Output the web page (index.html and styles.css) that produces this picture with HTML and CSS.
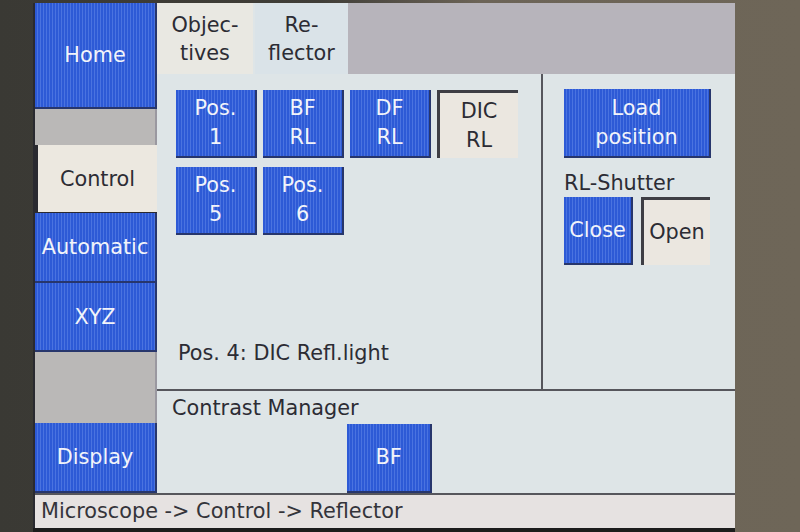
FILE: index.html
```html
<!DOCTYPE html>
<html lang="en">
<head>
  <meta charset="UTF-8" />
  <meta name="viewport" content="width=device-width, initial-scale=1.0" />
  <title>Microscope – Reflector</title>
  <link rel="stylesheet" href="styles.css">
</head>
<body>
  <div class="screen">
    <div class="top">
      <nav class="nav">
        <button class="nav-btn home">Home</button>
        <div class="nav-gap"></div>
        <button class="nav-btn active">Control</button>
        <button class="nav-btn auto">Automatic</button>
        <button class="nav-btn xyz">XYZ</button>
        <div class="nav-gap tall"></div>
        <button class="nav-btn display">Display</button>
      </nav>

      <main class="main">
        <div class="tabs">
          <div class="tab">Objec-<br>tives</div>
          <div class="tab current">Re-<br>flector</div>
          <div class="tab-fill"></div>
        </div>

        <div class="panel">
          <section class="positions">
            <div class="pos-grid">
              <button class="key">Pos.<br>1</button>
              <button class="key">BF<br>RL</button>
              <button class="key">DF<br>RL</button>
              <button class="key on">DIC<br>RL</button>
              <button class="key">Pos.<br>5</button>
              <button class="key">Pos.<br>6</button>
            </div>
            <p class="pos-info">Pos. 4: DIC Refl.light</p>
          </section>

          <section class="shutter">
            <button class="key load">Load<br>position</button>
            <div class="shutter-label">RL-Shutter</div>
            <div class="shutter-keys">
              <button class="key small">Close</button>
              <button class="key small on">Open</button>
            </div>
          </section>
        </div>

        <div class="contrast">
          <div class="contrast-label">Contrast Manager</div>
          <button class="key bf">BF</button>
        </div>
      </main>
    </div>

    <div class="status">Microscope -&gt; Control -&gt; Reflector</div>
  </div>
</body>
</html>
```

FILE: styles.css
```css
body {
  margin: 0;
  width: 800px;
  height: 532px;
  overflow: hidden;
  background: linear-gradient(90deg, #3a3934 0%, #403e38 40%, #6c6457 60%, #6e6658 100%);
  font-family: 'DejaVu Sans', sans-serif;
  font-size: 20.8px;
  color: #2c2c34;
}

.screen {
  margin: 3px 0 0 33px;
  width: 702px;
  height: 525px;
  display: flex;
  flex-direction: column;
  background: #dee5e7;
  border-left: 2px solid #2a2a30;
  box-sizing: border-box;
  box-shadow: 0 4px 0 #1c1c1c;
}

.top {
  display: flex;
  height: 490px;
}

/* left navigation column */
.nav {
  width: 122px;
  display: flex;
  flex-direction: column;
}

button {
  font: inherit;
  margin: 0;
  padding: 0;
  cursor: pointer;
}

.nav-btn {
  height: 70px;
  background: repeating-linear-gradient(90deg, #2d5ad6 0 2px, #4a73e0 2px 3px);
  color: #f2f4fa;
  border: none;
  border-right: 2px solid #27366c;
  border-bottom: 2px solid #27366c;
}

.nav-btn.home {
  height: 106px;
}

.nav-btn.active {
  height: 68px;
  background: #ece8e0;
  color: #2c2c34;
  border-left: 3px solid #2a2a30;
  border-right: none;
  border-bottom: 1px solid #2a2a30;
}

.nav-btn.xyz {
  height: 69px;
}

.nav-gap {
  height: 36px;
  background: #bab8b7;
  border-right: 2px solid #9a98a0;
}

.nav-gap.tall {
  height: 71px;
}

/* main area */
.main {
  flex: 1;
  display: flex;
  flex-direction: column;
}

.tabs {
  display: flex;
  height: 71px;
  gap: 2px;
}

.tab {
  width: 96px;
  display: flex;
  align-items: center;
  justify-content: center;
  text-align: center;
  line-height: 28px;
  background: #e9e8e2;
}

.tab.current {
  width: 93px;
  background: #dae3e8;
}

.tab-fill {
  flex: 1;
  background: #b7b4bb;
  margin-left: -2px;
}

.panel {
  display: flex;
  height: 315px;
  border-bottom: 2px solid #56565c;
}

.positions {
  width: 386px;
  display: flex;
  flex-direction: column;
  padding: 16px 0 24px 19px;
  box-sizing: border-box;
  border-right: 2px solid #56565c;
}

.pos-grid {
  display: grid;
  grid-template-columns: repeat(4, 81px);
  grid-auto-rows: 68px;
  gap: 9px 6px;
}

.key {
  background: repeating-linear-gradient(90deg, #2d5ad6 0 2px, #4a73e0 2px 3px);
  color: #f2f4fa;
  border: none;
  border-right: 2px solid #27366c;
  border-bottom: 2px solid #27366c;
  line-height: 29px;
  text-align: center;
}

.key.on {
  background: #ebe7e0;
  color: #2c2c34;
  border: none;
  border-top: 3px solid #3e3e44;
  border-left: 3px solid #3e3e44;
}

.pos-info {
  margin: auto 0 0 2px;
  line-height: 24px;
}

.shutter {
  flex: 1;
  padding: 15px 0 0 21px;
}

.load {
  width: 147px;
  height: 69px;
}

.shutter-label {
  margin: 13px 0 2px 0;
  line-height: 24px;
}

.shutter-keys {
  display: flex;
  gap: 8px;
}

.key.small {
  width: 69px;
  height: 68px;
}

.contrast {
  flex: 1;
  padding: 5px 0 0 15px;
  display: flex;
  flex-direction: column;
}

.contrast-label {
  line-height: 24px;
}

.key.bf {
  width: 85px;
  height: 69px;
  margin: auto 0 0 175px;
}

.status {
  height: 35px;
  border-top: 2px solid #56565c;
  box-sizing: border-box;
  background: #e6e2e1;
  padding-left: 6px;
  line-height: 33px;
  color: #34343a;
}
```
